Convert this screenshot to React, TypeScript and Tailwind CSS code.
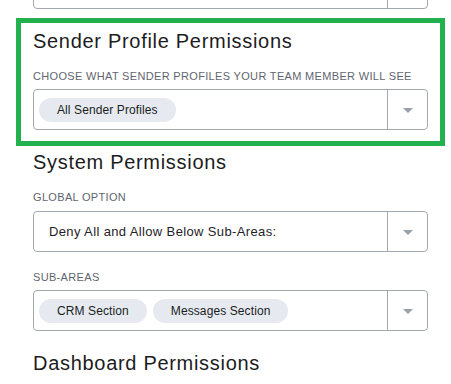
const font = { fontFamily: '"Liberation Sans", Arial, sans-serif' };

function Arrow() {
  return (
    <svg width="10" height="5" viewBox="0 0 10 5" className="block">
      <polygon points="0,0 10,0 5,5" fill="#9aa0a8" />
    </svg>
  );
}

function SelectBox({ children, className = "" }: { children?: React.ReactNode; className?: string }) {
  return (
    <div className={`flex h-[41px] rounded-[4px] border border-[#a3a8b0] bg-white ${className}`}>
      <div className="flex flex-1 items-center gap-[6px] pl-[5px]">{children}</div>
      <div className="w-px bg-[#a3a8b0]" />
      <div className="flex w-[39px] items-center justify-center pt-[2px]">
        <Arrow />
      </div>
    </div>
  );
}

function Chip({ label }: { label: string }) {
  return (
    <span className="h-6 rounded-full bg-[#e6eaf0] px-[18px] text-[12px] font-medium leading-6 tracking-[0.1px] text-[#1a1d22]">
      {label}
    </span>
  );
}

function Title({ children, className = "" }: { children: React.ReactNode; className?: string }) {
  return <h2 className={`text-[20px] leading-[28px] tracking-[0.7px] text-[#1c1c1e] ${className}`}>{children}</h2>;
}

function Label({ children, className = "" }: { children: React.ReactNode; className?: string }) {
  return <div className={`text-[11px] uppercase leading-4 tracking-[0.33px] text-[#5f6570] ${className}`}>{children}</div>;
}

export default function App() {
  return (
    <div className="h-[384px] w-[451px] overflow-hidden bg-white" style={font}>
      <div className="pl-[33px] pr-[23px]">
        <SelectBox className="-mt-[32px]" />

        <section className="-mx-[17px] mt-[9px] border-[5px] border-[#22b14c] px-[12px] pb-[11px] pt-[4px]">
          <Title>Sender Profile Permissions</Title>
          <Label className="mt-[13px]">Choose what sender profiles your team member will see</Label>
          <SelectBox className="mt-[5px]">
            <Chip label="All Sender Profiles" />
          </SelectBox>
        </section>

        <Title className="mt-[2px]">System Permissions</Title>
        <Label className="mt-[13px]">Global Option</Label>
        <SelectBox className="mt-[6px]">
          <span className="pl-[10px] text-[13px] tracking-[0.37px] text-[#1f2328]">Deny All and Allow Below Sub-Areas:</span>
        </SelectBox>
        <Label className="mt-[17px]">Sub-Areas</Label>
        <SelectBox className="mt-[5px]">
          <Chip label="CRM Section" />
          <Chip label="Messages Section" />
        </SelectBox>

        <Title className="mt-[18px]">Dashboard Permissions</Title>
      </div>
    </div>
  );
}
